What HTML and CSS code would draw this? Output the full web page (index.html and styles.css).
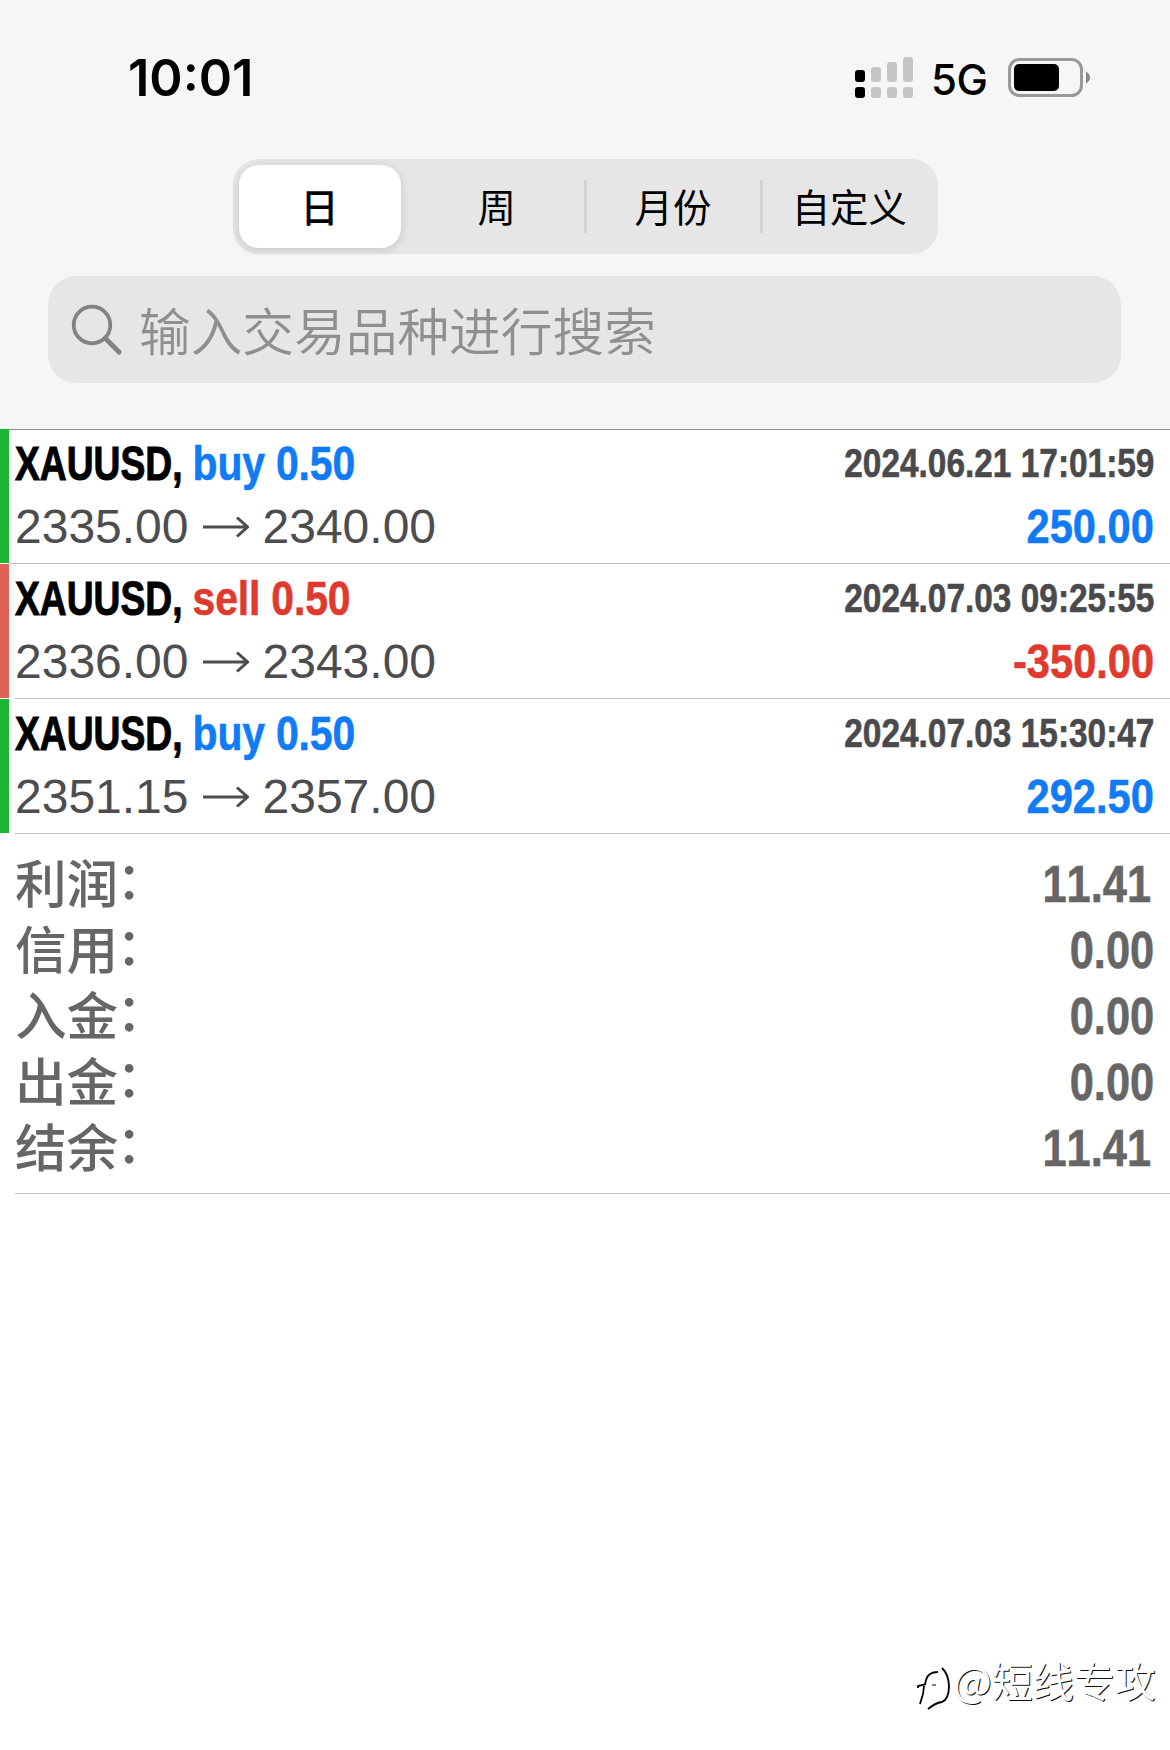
FILE: index.html
```html
<!DOCTYPE html>
<html lang="zh-CN">

<head>
  <meta charset="UTF-8">
  <meta name="viewport" content="width=device-width, initial-scale=1.0">
  <title>历史</title>
  <link rel="stylesheet" href="styles.css">
</head>

<body>
  <header class="header">
    <!-- Status bar -->
    <div class="status-bar">
      <span class="time">10:01</span>
      <div class="status-icons">
        <svg class="signal" width="58" height="42" viewBox="0 0 58 42">
          <g fill="#000">
            <rect x="0" y="13" width="10" height="12" rx="3" />
            <rect x="0" y="30" width="10" height="11" rx="3" />
          </g>
          <g fill="#c5c5c5">
            <rect x="16" y="10" width="10" height="15" rx="3" />
            <rect x="32" y="5" width="10" height="20" rx="3" />
            <rect x="48" y="0" width="10" height="25" rx="3" />
            <rect x="16" y="30" width="10" height="11" rx="3" />
            <rect x="32" y="30" width="10" height="11" rx="3" />
            <rect x="48" y="30" width="10" height="11" rx="3" />
          </g>
        </svg>
        <span class="network">5G</span>
        <svg class="battery" width="83" height="40" viewBox="0 0 83 40">
          <rect x="1.5" y="1.5" width="72" height="36" rx="10" fill="none" stroke="#999" stroke-width="3" />
          <rect x="6" y="6" width="45" height="27" rx="5" fill="#000" />
          <path d="M78 13.500 Q82 16 82 19.500 Q82 23 78 25.500 Z" fill="#888" />
        </svg>
      </div>
    </div>

    <!-- Period filter -->
    <nav class="segments">
      <div class="segment active">日</div>
      <div class="segment">周</div>
      <div class="segment divided">月份</div>
      <div class="segment divided">自定义</div>
    </nav>

    <div class="search">
      <svg width="52" height="52" viewBox="0 0 52 52" fill="none" stroke="#828284">
        <circle cx="21" cy="21" r="18.300" stroke-width="3.800" />
        <path d="M34.500 34.500 L48 48" stroke-width="5" stroke-linecap="round" />
      </svg>
      <span>输入交易品种进行搜索</span>
    </div>
  </header>

  <main>
    <div class="trade gain">
      <div class="trade-body">
        <div class="line">
          <div class="title"><span class="symbol">XAUUSD,</span> <span class="blue">buy 0.50</span></div>
          <div class="date">2024.06.21 17:01:59</div>
        </div>
        <div class="line">
          <div class="prices">2335.00
            <svg class="arrow" width="46" height="22" viewBox="0 0 46 22"><path d="M0 11 H44 M34 1.500 L44.500 11 L34 20.500" /></svg>
            2340.00</div>
          <div class="amount blue">250.00</div>
        </div>
      </div>
    </div>
    <div class="trade loss">
      <div class="trade-body">
        <div class="line">
          <div class="title"><span class="symbol">XAUUSD,</span> <span class="red">sell 0.50</span></div>
          <div class="date">2024.07.03 09:25:55</div>
        </div>
        <div class="line">
          <div class="prices">2336.00
            <svg class="arrow" width="46" height="22" viewBox="0 0 46 22"><path d="M0 11 H44 M34 1.500 L44.500 11 L34 20.500" /></svg>
            2343.00</div>
          <div class="amount red">-350.00</div>
        </div>
      </div>
    </div>
    <div class="trade gain">
      <div class="trade-body">
        <div class="line">
          <div class="title"><span class="symbol">XAUUSD,</span> <span class="blue">buy 0.50</span></div>
          <div class="date">2024.07.03 15:30:47</div>
        </div>
        <div class="line">
          <div class="prices">2351.15
            <svg class="arrow" width="46" height="22" viewBox="0 0 46 22"><path d="M0 11 H44 M34 1.500 L44.500 11 L34 20.500" /></svg>
            2357.00</div>
          <div class="amount blue">292.50</div>
        </div>
      </div>
    </div>

    <!-- Totals -->
    <div class="summary">
      <div class="total"><span class="label">利润<i>：</i></span><b class="ones">11.41</b></div>
      <div class="total"><span class="label">信用<i>：</i></span><b>0.00</b></div>
      <div class="total"><span class="label">入金<i>：</i></span><b>0.00</b></div>
      <div class="total"><span class="label">出金<i>：</i></span><b>0.00</b></div>
      <div class="total"><span class="label">结余<i>：</i></span><b class="ones">11.41</b></div>
    </div>
  </main>

  <div class="watermark">
    <svg width="36" height="46" viewBox="0 0 36 46" fill="none" stroke="#000">
      <path d="M22 6 Q12 6 10 14 L9 18.500 L2 20 V22 M8 20 L7 28 L4 38" stroke-width="1.800" />
      <path d="M26 2 Q32.500 8 33 20 Q33 33 26 36 Q19 37 12 43" stroke-width="1.900" />
      <path d="M16 19 H20" stroke-width="1" />
    </svg>
    <span>@短线专攻</span>
  </div>
</body>

</html>
```
FILE: styles.css
```css
* {
  box-sizing: border-box;
}

body {
  margin: 0;
  height: 1750px;
  overflow: hidden;
  position: relative;
  background-color: #fff;
  font-family: "Liberation Sans", "Noto Sans CJK SC", sans-serif;
  font-kerning: none;
}

.header {
  height: 429px;
  background-color: #f6f6f6;
}

/* Status bar */
.status-bar {
  display: flex;
  justify-content: space-between;
  height: 159px;
  padding: 48px 79px 0 128px;
  font-family: Inter, sans-serif;
}

.time {
  font-size: 50.5px;
  font-weight: 600;
  line-height: 60px;
}

.status-icons {
  display: flex;
  align-items: flex-start;
}

.signal {
  margin-top: 9px;
}

.network {
  width: 58px;
  margin: 2px 19px 0 18px;
  font-size: 42px;
  font-weight: 500;
  line-height: 60px;
  letter-spacing: -0.5px;
}

.battery {
  margin-top: 10px;
}

/* Period filter */
.segments {
  display: flex;
  width: 705px;
  height: 95px;
  margin: 0 auto;
  padding: 6px 0 6px 6px;
  border-radius: 26px;
  background-color: #e6e6e6;
}

.segment {
  flex: 1;
  position: relative;
  font-family: "Noto Sans CJK SC", sans-serif;
  font-size: 38.4px;
  line-height: 81px;
  text-align: center;
}

.segment.active {
  flex: 0 0 162px;
  margin-right: 8px;
  border-radius: 20px;
  background-color: #fff;
  box-shadow: 0 2px 10px rgba(0, 0, 0, 0.14);
  font-weight: 500;
}

.segment.divided::before {
  content: "";
  position: absolute;
  left: -1px;
  top: 15px;
  width: 3px;
  height: 53px;
  background-color: #d2d2d2;
}

/* Search field */
.search {
  display: flex;
  align-items: center;
  height: 107px;
  margin: 22px 49px 0 48px;
  padding-left: 23px;
  border-radius: 28px;
  background-color: #e6e6e8;
  color: #8f8f91;
  font-family: "Noto Sans CJK SC", sans-serif;
  font-size: 51.7px;
  font-weight: 350;
}

.search span {
  margin-left: 16px;
  padding-bottom: 3px;
}

/* Trades */
.trade {
  display: flex;
  height: 135px;
  padding-bottom: 1px;
}

.trade::before {
  content: "";
  width: 9px;
  background-color: #1ab535;
}

.trade.loss::before {
  background-color: #e06055;
}

.trade-body {
  flex: 1;
  height: 135px;
  margin-left: 6px;
  padding-top: 3px;
  border-bottom: 1px solid #bebebe;
}

.trade:first-child .trade-body {
  margin-left: 0;
  padding-left: 6px;
  border-top: 1px solid #8e8e8e;
  padding-top: 2px;
}

.line {
  display: flex;
  justify-content: space-between;
  height: 63px;
  padding-right: 16px;
  line-height: 63px;
  white-space: nowrap;
}

/* Condensed bold lettering */
.title,
.date,
.amount,
.total b {
  font-weight: bold;
  transform: scaleX(0.835);
  transform-origin: right;
  -webkit-text-stroke: 0.6px;
}

.title {
  font-size: 49px;
  transform-origin: left;
}

/* The ticker is set tighter than the volume next to it */
.symbol {
  display: inline-block;
  margin-right: -21.5px;
  transform: scaleX(0.91);
  transform-origin: left;
  -webkit-text-stroke: 1px;
}

.title .blue,
.title .red {
  letter-spacing: -0.2px;
}

.date {
  font-size: 40px;
  color: #4a4a4d;
}

.prices {
  display: flex;
  align-items: center;
  font-size: 48px;
  color: #4d4d4f;
}

.arrow {
  margin: 0 14px 0 14px;
  fill: none;
  stroke: #4d4d4f;
  stroke-width: 3;
}

.amount {
  font-size: 49px;
  transform: scaleX(0.85);
}

.blue {
  color: #107bf5;
}

.red {
  color: #e03a2e;
}

/* Totals */
.summary {
  height: 360px;
  margin-left: 15px;
  padding: 16px 16px 0 0;
  border-bottom: 1px solid #bebebe;
  color: #666;
}

.total {
  display: flex;
  justify-content: space-between;
  height: 66px;
  line-height: 66px;
}

.label {
  padding-top: 2px;
  font-size: 51.6px;
  font-weight: 500;
}

.label i {
  margin-left: -2px;
  font-style: normal;
  line-height: 0;
  vertical-align: 4px;
}

.total b {
  padding-top: 1px;
  font-size: 52px;
}

.total .ones {
  margin-right: 3px;
}

.watermark {
  position: absolute;
  left: 916px;
  top: 1666px;
  display: flex;
  color: #fff;
  font-family: "Noto Sans CJK SC", sans-serif;
  font-size: 41px;
  line-height: 40px;
  text-shadow: 1px 1px 0 #111;
}

.watermark span {
  margin: -7px 0 0 1px;
}
```
